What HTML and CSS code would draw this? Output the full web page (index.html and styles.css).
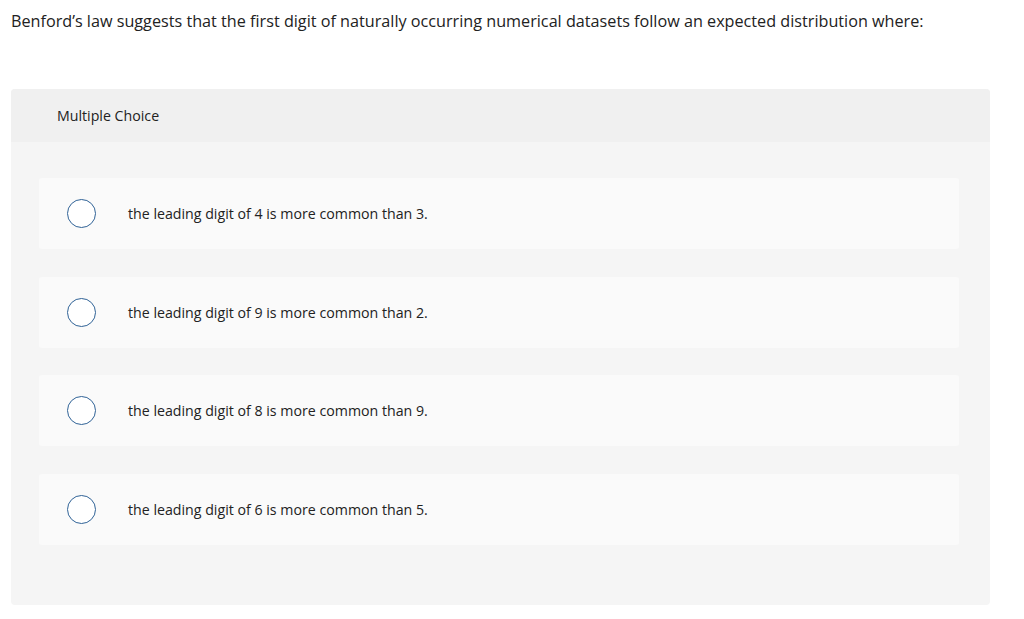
FILE: index.html
```html
<!DOCTYPE html>
<html>
<head>
<meta charset="utf-8">
<link rel="stylesheet" href="styles.css">
</head>
<body>
<p class="prompt">Benford’s law suggests that the first digit of naturally occurring numerical datasets follow an expected distribution where:</p>
<div class="card">
  <div class="card-head">Multiple Choice</div>
  <div class="card-body">
    <div class="option"><span class="radio"></span><span class="label">the leading digit of 4 is more common than 3.</span></div>
    <div class="option"><span class="radio"></span><span class="label">the leading digit of 9 is more common than 2.</span></div>
    <div class="option"><span class="radio"></span><span class="label">the leading digit of 8 is more common than 9.</span></div>
    <div class="option"><span class="radio"></span><span class="label">the leading digit of 6 is more common than 5.</span></div>
  </div>
</div>
</body>
</html>
```
FILE: styles.css
```css
body {
  margin: 0;
  padding: 0 34px 0 11px;
  font-family: "Open Sans", "Liberation Sans", sans-serif;
  color: #222;
  background: #fff;
}
.prompt {
  margin: 0;
  padding-top: 10px;
  font-size: 16.2px;
  line-height: 22px;
  height: 79px;
}
.card {
  background: #f5f5f5;
  border-radius: 4px;
  overflow: hidden;
}
.card-head {
  background: #f0f0f0;
  height: 53px;
  display: flex;
  align-items: center;
  padding-left: 46px;
  font-size: 14.2px;
}
.card-body {
  padding: 36px 31px 60px 28px;
  display: flex;
  flex-direction: column;
  gap: 27.5px;
}
.option {
  background: #fafafa;
  border-radius: 3px;
  height: 71px;
  display: flex;
  align-items: center;
  padding-left: 28px;
  font-size: 14.2px;
}
.radio {
  width: 27px;
  height: 27px;
  border: 1.5px solid #2f6296;
  border-radius: 50%;
  background: #fff;
  flex: none;
}
.label {
  margin-left: 32px;
}
```
